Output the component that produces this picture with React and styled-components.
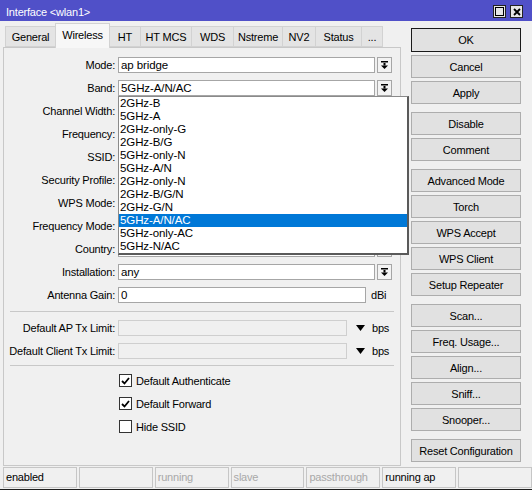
import styled, { createGlobalStyle } from "styled-components";

const GlobalStyle = createGlobalStyle`
  html, body { margin: 0; padding: 0; background: #fff; }
  body {
    font-family: "Liberation Sans", Arial, sans-serif;
    font-size: 11px;
    letter-spacing: -0.2px;
    color: #000;
  }
  * { box-sizing: border-box; }
`;

const Page = styled.div`
  width: 532px;
  height: 494px;
  display: flex;
  flex-direction: column;
  overflow: hidden;
`;

const Window = styled.div`
  flex: 1;
  display: flex;
  flex-direction: column;
  background: #f0f0f0;
  padding-bottom: 1px;
`;

const BackStrip = styled.div`
  height: 5px;
  flex: none;
  background: #fff;
  border-top: 1px solid #1e1e1e;
`;

const TitleBar = styled.div`
  height: 21px;
  flex: none;
  background: #5050c8;
  color: #fff;
  display: flex;
  align-items: flex-start;
  justify-content: space-between;
  padding: 5px 9px 0 6px;
  font-size: 11px;
`;

const TitleText = styled.span`
  line-height: 14px;
`;

const TitleButtons = styled.div`
  display: flex;
  gap: 4px;
`;

const TitleButton = styled.div`
  width: 13px;
  height: 13px;
  background: #e6e6e6;
  border: 1px solid #222;
  display: flex;
  align-items: center;
  justify-content: center;
`;

const Body = styled.div`
  flex: 1;
  display: flex;
  min-height: 0;
`;

const LeftCol = styled.div`
  width: 401px;
  padding: 2px 0 1px 3px;
  display: flex;
  flex-direction: column;
`;

const TabRow = styled.div`
  height: 24px;
  display: flex;
  align-items: flex-end;
  padding-left: 2px;
  position: relative;
  z-index: 1;
`;

const Tab = styled.div`
  width: ${({ $w }) => $w}px;
  height: ${({ $active }) => ($active ? 25 : 21)}px;
  margin-bottom: ${({ $active }) => ($active ? -1 : 0)}px;
  margin-right: -1px;
  background: ${({ $active }) => ($active ? "#f7f7f7" : "#e4e4e4")};
  border: 1px solid #d2d2d2;
  border-bottom: ${({ $active }) => ($active ? "none" : "1px solid #d2d2d2")};
  display: flex;
  align-items: center;
  justify-content: center;
  padding-bottom: ${({ $active }) => ($active ? 3 : 0)}px;
  white-space: nowrap;
`;

const Panel = styled.div`
  flex: 1;
  background: #f0f0f0;
  border: 1px solid #c8c8c8;
  padding-top: 9px;
  display: flex;
  flex-direction: column;
`;

const Row = styled.div`
  height: 16px;
  margin-bottom: 7px;
  display: flex;
  align-items: center;
  gap: 3px;
`;

const Label = styled.div`
  width: 111px;
  text-align: right;
  white-space: nowrap;
`;

const Field = styled.div`
  position: relative;
  display: flex;
  align-items: center;
  gap: 2px;
`;

const Input = styled.div`
  width: ${({ $w }) => $w}px;
  height: 16px;
  background: ${({ $disabled }) => ($disabled ? "#f0f0f0" : "#fff")};
  border: 1px solid ${({ $disabled }) => ($disabled ? "#cfcfcf" : "#a6a6a6")};
  padding-left: 2px;
  font-size: 11.5px;
  letter-spacing: -0.1px;
  line-height: 14px;
  white-space: nowrap;
  overflow: hidden;
`;

const ComboButton = styled.div`
  width: 15px;
  height: 16px;
  background: #f3f3f3;
  border: 1px solid #a6a6a6;
  display: flex;
  align-items: center;
  justify-content: center;
`;

const Unit = styled.span`
  margin-left: 3px;
`;

const Arrow = styled.span`
  display: inline-flex;
  margin: 0 5px 0 7px;
`;

const Separator = styled.div`
  height: 1px;
  background: #c8c8c8;
  margin: ${({ $top }) => $top}px 6px 8px 6px;
`;

const CheckRow = styled.label`
  height: 13px;
  margin: 0 0 10px 115px;
  display: flex;
  align-items: center;
  gap: 4px;
`;

const Box = styled.span`
  width: 13px;
  height: 13px;
  background: #fff;
  border: 1px solid #333;
  display: flex;
  align-items: center;
  justify-content: center;
`;

const Dropdown = styled.div`
  position: absolute;
  left: 0;
  top: 16px;
  width: 291px;
  background: #fff;
  border: 1px solid #8a8a8a;
  border-right: 2px solid #5a5a5a;
  border-bottom: 2px solid #5a5a5a;
  z-index: 5;
`;

const Option = styled.div`
  height: 13px;
  line-height: 13px;
  padding-left: 1px;
  font-size: 11.5px;
  letter-spacing: -0.1px;
  background: ${({ $selected }) => ($selected ? "#0078d7" : "transparent")};
  color: ${({ $selected }) => ($selected ? "#fff" : "#000")};
`;

const RightCol = styled.div`
  width: 110px;
  margin-left: 10px;
  padding-top: 7px;
  display: flex;
  flex-direction: column;
`;

const Button = styled.div`
  height: ${({ $default }) => ($default ? 24 : 23)}px;
  margin-top: ${({ $first, $groupStart }) => ($first ? 0 : $groupStart ? 8 : 3)}px;
  background: #e1e1e1;
  border: 1px solid ${({ $default }) => ($default ? "#1a1a1a" : "#adadad")};
  display: flex;
  align-items: center;
  justify-content: center;
  white-space: nowrap;
`;

const StatusBar = styled.div`
  height: 21px;
  flex: none;
  display: flex;
  gap: 2px;
  padding-left: 3px;
`;

const StatusCell = styled.div`
  width: ${({ $w }) => $w}px;
  height: 21px;
  border: 1px solid #c6c6c6;
  padding-left: 2px;
  line-height: 19px;
  color: ${({ $dim }) => ($dim ? "#a8a8a8" : "#000")};
  white-space: nowrap;
  overflow: hidden;
`;

const ComboIcon = () => (
  <svg width="7" height="8" viewBox="0 0 7 8">
    <rect x="0" y="0" width="7" height="1.5" fill="#000" />
    <rect x="2.5" y="2" width="2" height="2.5" fill="#000" />
    <polygon points="0,4.5 7,4.5 3.5,8" fill="#000" />
  </svg>
);

const DownTriangle = () => (
  <svg width="9" height="6" viewBox="0 0 9 6">
    <polygon points="0,0 9,0 4.5,6" fill="#000" />
  </svg>
);

const CheckMark = () => (
  <svg width="9" height="8" viewBox="0 0 9 8">
    <polyline points="1,4 3.5,6.5 8,1" fill="none" stroke="#000" strokeWidth="1.8" />
  </svg>
);

const tabs = [
  { label: "General", w: 51 },
  { label: "Wireless", w: 55, active: true },
  { label: "HT", w: 32 },
  { label: "HT MCS", w: 52 },
  { label: "WDS", w: 43 },
  { label: "Nstreme", w: 50 },
  { label: "NV2", w: 34 },
  { label: "Status", w: 47 },
  { label: "...", w: 22 },
];

const bands = [
  "2GHz-B",
  "5GHz-A",
  "2GHz-only-G",
  "2GHz-B/G",
  "5GHz-only-N",
  "5GHz-A/N",
  "2GHz-only-N",
  "2GHz-B/G/N",
  "2GHz-G/N",
  "5GHz-A/N/AC",
  "5GHz-only-AC",
  "5GHz-N/AC",
];

// rows under the open list keep their fields, but their values are hidden behind it
const combos = [
  { label: "Mode:", value: "ap bridge" },
  { label: "Band:", value: "5GHz-A/N/AC", open: true },
  { label: "Channel Width:", value: "" },
  { label: "Frequency:", value: "" },
  { label: "SSID:", value: "" },
  { label: "Security Profile:", value: "" },
  { label: "WPS Mode:", value: "" },
  { label: "Frequency Mode:", value: "" },
  { label: "Country:", value: "" },
  { label: "Installation:", value: "any" },
];

const buttonGroups = [
  ["OK", "Cancel", "Apply"],
  ["Disable", "Comment"],
  ["Advanced Mode", "Torch", "WPS Accept", "WPS Client", "Setup Repeater"],
  ["Scan...", "Freq. Usage...", "Align...", "Sniff...", "Snooper..."],
  ["Reset Configuration"],
];

const status = [
  { text: "enabled", w: 74 },
  { text: "", w: 74 },
  { text: "running", w: 74, dim: true },
  { text: "slave", w: 74, dim: true },
  { text: "passthrough", w: 74, dim: true },
  { text: "running ap", w: 74 },
  { text: "", w: 74 },
];

const App = () => {
  return (
    <>
      <GlobalStyle />
      <Page>
        <Window>
          <TitleBar>
            <TitleText>Interface &lt;wlan1&gt;</TitleText>
            <TitleButtons>
              <TitleButton>
                <svg width="9" height="9" viewBox="0 0 9 9">
                  <rect x="0.5" y="0.5" width="8" height="8" fill="none" stroke="#000" />
                </svg>
              </TitleButton>
              <TitleButton>
                <svg width="8" height="8" viewBox="0 0 8 8">
                  <path d="M1 1 L7 7 M7 1 L1 7" stroke="#000" strokeWidth="1.8" />
                </svg>
              </TitleButton>
            </TitleButtons>
          </TitleBar>

          <Body>
            <LeftCol>
              <TabRow>
                {tabs.map((t) => (
                  <Tab key={t.label} $w={t.w} $active={t.active}>
                    {t.label}
                  </Tab>
                ))}
              </TabRow>
              <Panel>
                {combos.map((c) => (
                  <Row key={c.label}>
                    <Label>{c.label}</Label>
                    <Field>
                      <Input $w={257}>{c.value}</Input>
                      <ComboButton>
                        <ComboIcon />
                      </ComboButton>
                      {c.open && (
                        <Dropdown>
                          {bands.map((b) => (
                            <Option key={b} $selected={b === c.value}>
                              {b}
                            </Option>
                          ))}
                        </Dropdown>
                      )}
                    </Field>
                  </Row>
                ))}
                <Row>
                  <Label>Antenna Gain:</Label>
                  <Field>
                    <Input $w={248}>0</Input>
                    <Unit>dBi</Unit>
                  </Field>
                </Row>
                <Separator $top={1} />
                <Row>
                  <Label>Default AP Tx Limit:</Label>
                  <Field>
                    <Input $w={229} $disabled />
                    <Arrow>
                      <DownTriangle />
                    </Arrow>
                    <span>bps</span>
                  </Field>
                </Row>
                <Row>
                  <Label>Default Client Tx Limit:</Label>
                  <Field>
                    <Input $w={229} $disabled />
                    <Arrow>
                      <DownTriangle />
                    </Arrow>
                    <span>bps</span>
                  </Field>
                </Row>
                <Separator $top={-1} />
                <CheckRow>
                  <Box>
                    <CheckMark />
                  </Box>
                  Default Authenticate
                </CheckRow>
                <CheckRow>
                  <Box>
                    <CheckMark />
                  </Box>
                  Default Forward
                </CheckRow>
                <CheckRow>
                  <Box />
                  Hide SSID
                </CheckRow>
              </Panel>
            </LeftCol>

            <RightCol>
              {buttonGroups.map((group, gi) =>
                group.map((label, i) => (
                  <Button
                    key={label}
                    $first={gi === 0 && i === 0}
                    $groupStart={gi > 0 && i === 0}
                    $default={label === "OK"}
                  >
                    {label}
                  </Button>
                ))
              )}
            </RightCol>
          </Body>

          <StatusBar>
            {status.map((s, i) => (
              <StatusCell key={i} $w={s.w} $dim={s.dim}>
                {s.text}
              </StatusCell>
            ))}
          </StatusBar>
        </Window>
        <BackStrip />
      </Page>
    </>
  );
};

export default App;
